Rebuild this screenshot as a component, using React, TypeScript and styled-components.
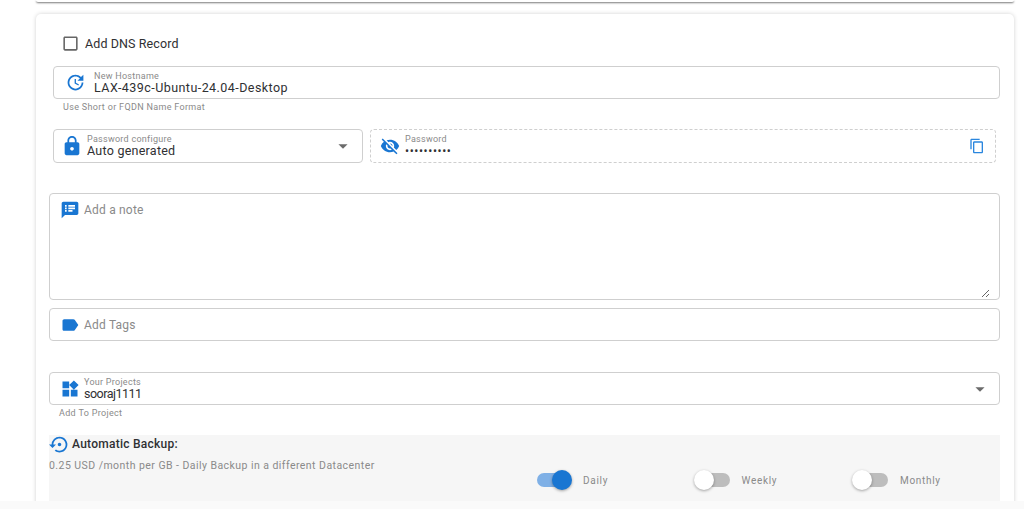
import { ReactNode } from "react"
import styled, { createGlobalStyle } from "styled-components"
import {
  MdArrowDropDown,
  MdCheckBoxOutlineBlank,
  MdLabel,
  MdLock,
  MdOutlineContentCopy,
  MdSettingsBackupRestore,
  MdSpeakerNotes,
  MdUpdate,
  MdVisibilityOff,
  MdWidgets,
} from "react-icons/md"

const Global = createGlobalStyle`
  html, body {
    margin: 0;
    padding: 0;
    background: #fff;
    overflow: hidden;
  }
  * {
    box-sizing: border-box;
  }
`

const Page = styled.div`
  width: 1024px;
  height: 509px;
  display: flex;
  flex-direction: column;
  overflow: hidden;
  font-family: Roboto, "Liberation Sans", sans-serif;
  color: #2f3033;
`

const Viewport = styled.div`
  height: 501px;
  overflow: hidden;
  padding: 0 10px 0 36px;
`

const BottomStrip = styled.div`
  height: 8px;
  background: #fafafa;
`

const TopCard = styled.div`
  height: 2px;
  background: #fff;
  border-radius: 0 0 4px 4px;
  box-shadow: 0 1px 2px rgba(0, 0, 0, 0.55);
`

const Card = styled.section`
  margin-top: 12px;
  height: 520px;
  padding: 22px 14px 0 13px;
  background: #fff;
  border-radius: 5px;
  box-shadow: 0 0 4px rgba(0, 0, 0, 0.18);
`

const CheckRow = styled.label`
  height: 14px;
  margin-left: 12px;
  display: flex;
  align-items: center;
  gap: 5px;
  font-size: 12.5px;
  letter-spacing: 0.1px;
  color: #2f3033;
  svg {
    color: #666;
    flex: none;
  }
`

const Field = styled.div<{ $top?: number; $inset?: number; $dashed?: boolean; $width?: number; $pad?: number; $gap?: number }>`
  height: 34px;
  margin-top: ${(p) => p.$top ?? 0}px;
  margin-left: ${(p) => p.$inset ?? 0}px;
  padding-left: ${(p) => p.$pad ?? 10}px;
  padding-right: 10px;
  display: flex;
  align-items: center;
  gap: ${(p) => p.$gap ?? 4}px;
  flex: ${(p) => (p.$width ? `0 0 ${p.$width}px` : "1")};
  border: 1px ${(p) => (p.$dashed ? "dashed" : "solid")} #cfcfcf;
  border-radius: 4px;
  background: #fff;
  svg {
    flex: none;
  }
`

const FlowField = styled(Field)`
  flex: none;
  height: 33px;
`

const IconSlot = styled.span`
  display: flex;
  color: #1976d2;
`

const FieldBody = styled.div`
  flex: 1;
  display: flex;
  flex-direction: column;
  min-width: 0;
`

const FieldLabel = styled.span`
  font-size: 9px;
  line-height: 10px;
  letter-spacing: 0.27px;
  color: #8a8a8a;
`

const FieldValue = styled.span<{ $spacing?: number }>`
  font-size: 12.5px;
  line-height: 14px;
  letter-spacing: ${(p) => p.$spacing ?? 0.25}px;
  color: #2f3033;
`

const Dots = styled.span`
  font-size: 12px;
  line-height: 14px;
  letter-spacing: 0.6px;
  color: #2f3033;
`

const Placeholder = styled.span`
  font-size: 12px;
  letter-spacing: 0.2px;
  color: #8a8a8a;
`

const Helper = styled.div<{ $inset: number }>`
  margin-left: ${(p) => p.$inset}px;
  margin-top: 2px;
  height: 12px;
  font-size: 9px;
  line-height: 12px;
  letter-spacing: 0.33px;
  color: #8a8a8a;
`

const PasswordRow = styled.div`
  margin-top: 16px;
  margin-left: 4px;
  margin-right: 4px;
  display: flex;
  gap: 7px;
`

const ArrowSlot = styled.span`
  display: flex;
  margin-right: -2px;
  color: #6b6b6b;
`

const CopySlot = styled.span`
  display: flex;
  color: #2a86de;
`

const NoteBox = styled.div`
  position: relative;
  height: 107px;
  margin-top: 30px;
  padding: 6px 10px;
  display: flex;
  align-items: flex-start;
  gap: 4px;
  border: 1px solid #cfcfcf;
  border-radius: 4px;
`

const NoteText = styled(Placeholder)`
  margin-top: 3px;
`

const Resizer = styled.svg`
  position: absolute;
  right: 9px;
  bottom: 1px;
`

const BackupPanel = styled.div`
  height: 80px;
  margin-top: 16px;
  background: #f6f6f6;
`

const BackupTitle = styled.div`
  height: 18px;
  display: flex;
  align-items: center;
  gap: 2px;
  font-size: 12px;
  font-weight: 500;
  letter-spacing: 0.25px;
  color: #2f3033;
  svg {
    color: #1976d2;
    flex: none;
  }
`

const BackupPrice = styled.div`
  margin-top: 6px;
  font-size: 10.5px;
  line-height: 14px;
  letter-spacing: 0.45px;
  color: #8a8a8a;
`

const SwitchRow = styled.div`
  padding-left: 488px;
  display: flex;
`

const SwitchItem = styled.div`
  flex: 0 0 158.5px;
  display: flex;
  align-items: center;
`

const Track = styled.span<{ $on: boolean }>`
  position: relative;
  width: 34px;
  height: 14px;
  border-radius: 7px;
  background: ${(p) => (p.$on ? "#7fb0e6" : "#bdbdbd")};
`

const Knob = styled.span<{ $on: boolean }>`
  position: absolute;
  top: -3px;
  left: ${(p) => (p.$on ? 15 : -2)}px;
  width: 20px;
  height: 20px;
  border-radius: 50%;
  background: ${(p) => (p.$on ? "#1976d2" : "#fff")};
  box-shadow: 0 1px 3px rgba(0, 0, 0, 0.35);
`

const SwitchLabel = styled.span`
  margin-left: 12px;
  font-size: 10px;
  letter-spacing: 0.7px;
  color: #8a8a8a;
`

function Toggle({ on, label }: { on: boolean; label: string }) {
  return (
    <SwitchItem>
      <Track $on={on}>
        <Knob $on={on} />
      </Track>
      <SwitchLabel>{label}</SwitchLabel>
    </SwitchItem>
  )
}

function Icon({ children }: { children: ReactNode }) {
  return <IconSlot>{children}</IconSlot>
}

export default function App() {
  return (
    <Page>
      <Global />
      <Viewport>
        <TopCard />
        <Card>
          <CheckRow>
            <MdCheckBoxOutlineBlank size={19} />
            Add DNS Record
          </CheckRow>

          <FlowField $top={16} $inset={4} $pad={11} $gap={8}>
            <Icon>
              <MdUpdate size={21} />
            </Icon>
            <FieldBody>
              <FieldLabel>New Hostname</FieldLabel>
              <FieldValue $spacing={0.45}>LAX-439c-Ubuntu-24.04-Desktop</FieldValue>
            </FieldBody>
          </FlowField>
          <Helper $inset={14}>Use Short or FQDN Name Format</Helper>

          <PasswordRow>
            <Field $width={310} $pad={7}>
              <Icon>
                <MdLock size={22} />
              </Icon>
              <FieldBody>
                <FieldLabel>Password configure</FieldLabel>
                <FieldValue>Auto generated</FieldValue>
              </FieldBody>
              <ArrowSlot>
                <MdArrowDropDown size={22} />
              </ArrowSlot>
            </Field>
            <Field $dashed $pad={9} $gap={5}>
              <Icon>
                <MdVisibilityOff size={20} />
              </Icon>
              <FieldBody>
                <FieldLabel>Password</FieldLabel>
                <Dots>••••••••••</Dots>
              </FieldBody>
              <CopySlot>
                <MdOutlineContentCopy size={16} />
              </CopySlot>
            </Field>
          </PasswordRow>

          <NoteBox>
            <Icon>
              <MdSpeakerNotes size={20} />
            </Icon>
            <NoteText>Add a note</NoteText>
            <Resizer width="10" height="10" viewBox="0 0 10 10">
              <path d="M2 9 L9 2 M6 9 L9 6" stroke="#666" strokeWidth="1" fill="none" />
            </Resizer>
          </NoteBox>

          <FlowField $top={8}>
            <Icon>
              <MdLabel size={20} />
            </Icon>
            <Placeholder>Add Tags</Placeholder>
          </FlowField>

          <FlowField $top={31}>
            <Icon>
              <MdWidgets size={20} />
            </Icon>
            <FieldBody>
              <FieldLabel>Your Projects</FieldLabel>
              <FieldValue $spacing={-0.5}>sooraj1111</FieldValue>
            </FieldBody>
            <ArrowSlot>
              <MdArrowDropDown size={22} />
            </ArrowSlot>
          </FlowField>
          <Helper $inset={10}>Add To Project</Helper>

          <BackupPanel>
            <BackupTitle>
              <MdSettingsBackupRestore size={21} />
              Automatic Backup:
            </BackupTitle>
            <BackupPrice>0.25 USD /month per GB - Daily Backup in a different Datacenter</BackupPrice>
            <SwitchRow>
              <Toggle on label="Daily" />
              <Toggle on={false} label="Weekly" />
              <Toggle on={false} label="Monthly" />
            </SwitchRow>
          </BackupPanel>
        </Card>
      </Viewport>
      <BottomStrip />
    </Page>
  )
}
